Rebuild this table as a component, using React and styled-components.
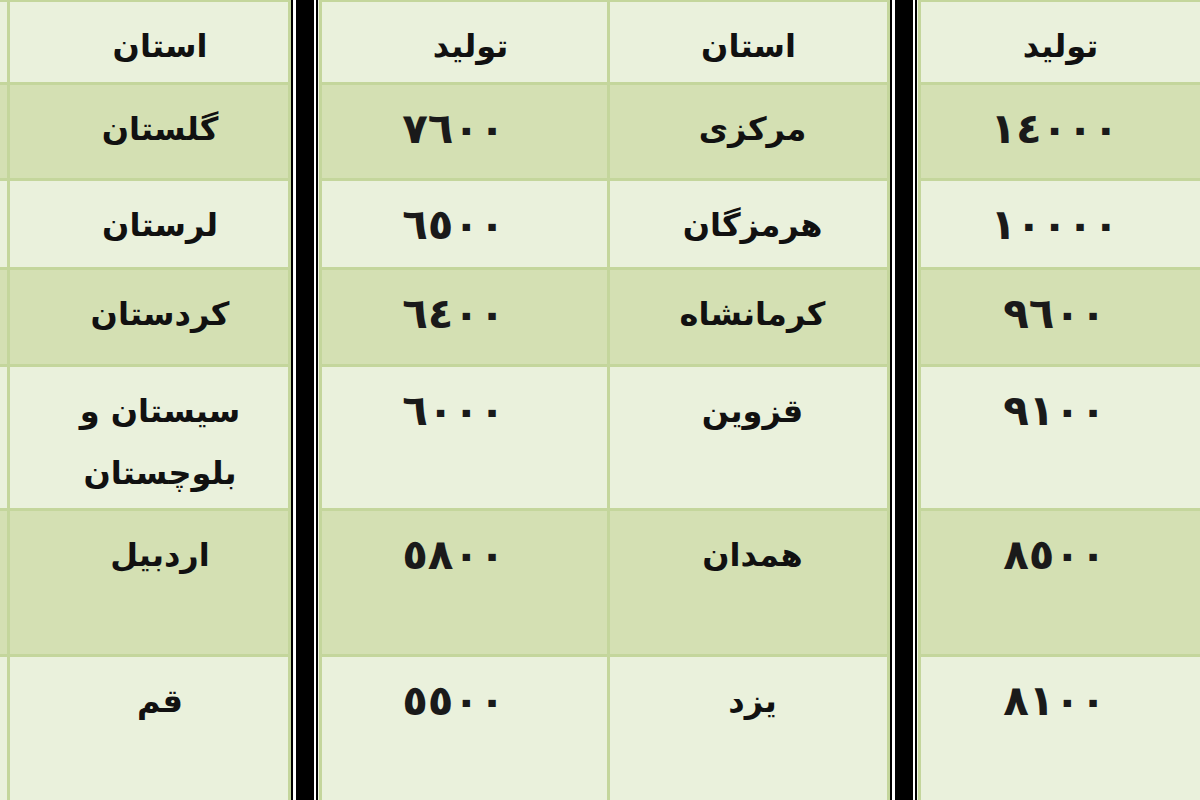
import React from "react";
import styled, { createGlobalStyle } from "styled-components";

const GlobalStyle = createGlobalStyle`
  html, body {
    margin: 0;
    padding: 0;
    height: 800px;
    overflow: hidden;
    background: #c4d69c;
  }
`;

const rows = [
  { prod1: "١٤٠٠٠", name1: "مرکزی", prod2: "٧٦٠٠", name2: ["گلستان"] },
  { prod1: "١٠٠٠٠", name1: "هرمزگان", prod2: "٦٥٠٠", name2: ["لرستان"] },
  { prod1: "٩٦٠٠", name1: "کرمانشاه", prod2: "٦٤٠٠", name2: ["کردستان"] },
  { prod1: "٩١٠٠", name1: "قزوین", prod2: "٦٠٠٠", name2: ["سیستان و", "بلوچستان"] },
  { prod1: "٨٥٠٠", name1: "همدان", prod2: "٥٨٠٠", name2: ["اردبیل"] },
  { prod1: "٨١٠٠", name1: "یزد", prod2: "٥٥٠٠", name2: ["قم"] },
];

function App() {
  return (
    <>
      <GlobalStyle />
      <Table>
        <Divider $col={2} />
        <Divider $col={5} />

        <Cell>
          <Label>تولید</Label>
        </Cell>
        <Cell>
          <Label>استان</Label>
        </Cell>
        <Cell $pad={12}>
          <Label>تولید</Label>
        </Cell>
        <Cell $pad={22}>
          <Label>استان</Label>
        </Cell>
        <Cell />

        {rows.map((row, i) => {
          const dark = i % 2 === 0;
          return (
            <React.Fragment key={row.name1}>
              <Cell $dark={dark} $padR={12}>
                <Amount>{row.prod1}</Amount>
              </Cell>
              <Cell $dark={dark} $pad={8}>
                <Label>{row.name1}</Label>
              </Cell>
              <Cell $dark={dark} $padR={22}>
                <Amount>{row.prod2}</Amount>
              </Cell>
              <Cell $dark={dark} $pad={22}>
                <Label>
                  {row.name2.map((line, j) => (
                    <span key={j}>
                      {line}
                      {j < row.name2.length - 1 && <br />}
                    </span>
                  ))}
                </Label>
              </Cell>
              <Cell $dark={dark} />
            </React.Fragment>
          );
        })}
      </Table>
    </>
  );
}

export default App;

const Table = styled.div`
  direction: rtl;
  display: grid;
  grid-template-columns: 279px 28px 277px 285px 28px 278px 7px;
  grid-template-rows: 80px 93px 86px 94px 141px 143px 150px;
  gap: 3px;
  padding-top: 2px;
  width: 1200px;
  background: #c4d69c;
`;

const Cell = styled.div`
  background: ${({ $dark }) => ($dark ? "#d4e0b3" : "#eaf1dc")};
  display: flex;
  justify-content: center;
  align-items: flex-start;
  padding: 13px ${({ $padR }) => $padR || 0}px 0 ${({ $pad }) => $pad || 0}px;
  box-sizing: border-box;
  overflow: hidden;
`;

const Label = styled.div`
  font-family: "DejaVu Sans", "Noto Sans", sans-serif;
  font-weight: bold;
  font-size: 32px;
  line-height: 62px;
  color: #111;
  text-align: center;
  white-space: nowrap;
`;

const Amount = styled.div`
  font-family: "DejaVu Sans", "Noto Sans", sans-serif;
  font-weight: bold;
  font-size: 42px;
  line-height: 62px;
  letter-spacing: 15px;
  color: #1a1a1a;
  direction: ltr;
`;

const Divider = styled.div`
  grid-column: ${({ $col }) => $col};
  grid-row: 1 / -1;
  margin-top: -2px;
  background: linear-gradient(
    to right,
    #000 0 2px,
    #fff 2px 5px,
    #000 5px 23px,
    #fff 23px 25px,
    #000 25px 27px,
    #eef3e2 27px 28px
  );
`;
